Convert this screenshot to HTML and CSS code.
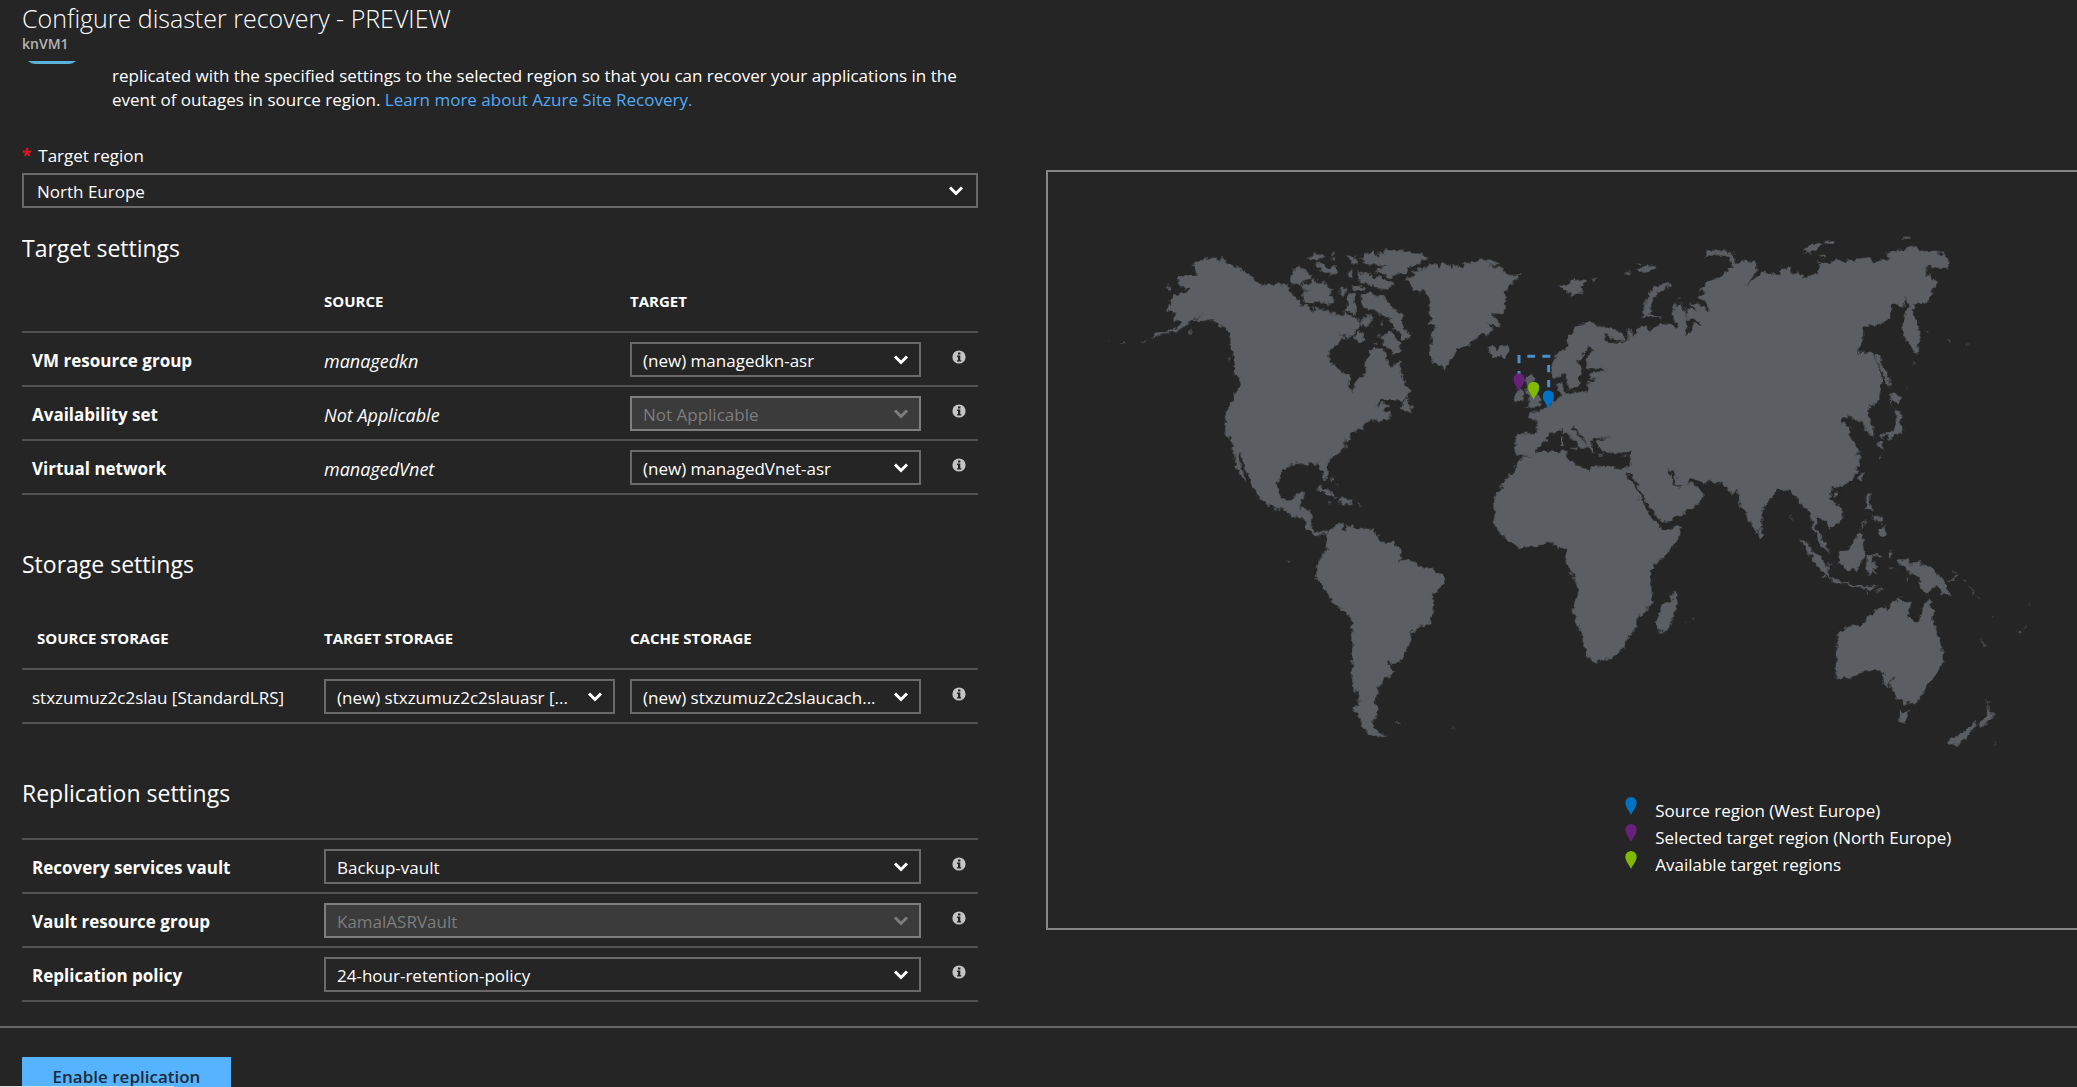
FILE: index.html
```html
<!DOCTYPE html>
<html lang="en">
<head>
<meta charset="utf-8">
<title>Configure disaster recovery - PREVIEW</title>
<link rel="stylesheet" href="styles.css">
</head>
<body>
<svg class="defs" aria-hidden="true">
  <symbol id="chevron" viewBox="0 0 16 12"><path d="M2 2.5 8 8.5 14 2.5" fill="none" stroke="currentColor" stroke-width="3"/></symbol>
  <symbol id="info" viewBox="0 0 14 14"><circle cx="7" cy="7" r="6.6" fill="#c4c4c4"/><path d="M6 2.5h2.4v2H6zM5 5.6h3.3v4.6h1V11.500H5v-1.300h1V6.900H5z" fill="#252525"/></symbol>
  <symbol id="pin" viewBox="0 0 34 54"><path d="M17 0A17 17 0 0 1 34 17C34 30 22 42 17 54 12 42 0 30 0 17A17 17 0 0 1 17 0Z"/></symbol>
</svg>
<div class="blade">
  <header class="blade-header">
    <h1>Configure disaster recovery - PREVIEW</h1>
    <p class="subtitle">knVM1</p>
  </header>
  <main class="content">
    <form class="settings" id="settings">
      <div class="intro">
        <svg class="intro-icon" viewBox="0 0 48 3" aria-hidden="true"><path d="M0 0H48Q45 3 40 3H8Q3 3 0 0Z" fill="#59b4d9"/></svg>
        <p>replicated with the specified settings to the selected region so that you can recover your applications in the event of outages in source region. <a href="#learn">Learn more about Azure Site Recovery.</a></p>
      </div>
      <label class="field-label" for="region"><span class="required">*</span>Target region</label>
      <div class="select region"><select id="region"><option>North Europe</option></select><svg><use href="#chevron"/></svg></div>

      <section class="group target">
        <h2>Target settings</h2>
        <table>
          <colgroup><col class="c1"><col class="c2"><col class="c3"><col class="c4"></colgroup>
          <thead><tr><td></td><th scope="col">SOURCE</th><th scope="col">TARGET</th><td></td></tr></thead>
          <tbody>
            <tr><th scope="row"><label for="vmrg">VM resource group</label></th><td class="source">managedkn</td><td><div class="select"><select id="vmrg"><option>(new) managedkn-asr</option></select><svg><use href="#chevron"/></svg></div></td><td class="info"><svg><use href="#info"/></svg></td></tr>
            <tr><th scope="row"><label for="avset">Availability set</label></th><td class="source">Not Applicable</td><td><div class="select disabled"><select id="avset" disabled><option>Not Applicable</option></select><svg><use href="#chevron"/></svg></div></td><td class="info"><svg><use href="#info"/></svg></td></tr>
            <tr><th scope="row"><label for="vnet">Virtual network</label></th><td class="source">managedVnet</td><td><div class="select"><select id="vnet"><option>(new) managedVnet-asr</option></select><svg><use href="#chevron"/></svg></div></td><td class="info"><svg><use href="#info"/></svg></td></tr>
          </tbody>
        </table>
      </section>

      <section class="group">
        <h2>Storage settings</h2>
        <table class="storage">
          <colgroup><col class="c1"><col class="c2"><col class="c3"><col class="c4"></colgroup>
          <thead><tr><th scope="col">SOURCE STORAGE</th><th scope="col">TARGET STORAGE</th><th scope="col">CACHE STORAGE</th><td></td></tr></thead>
          <tbody>
            <tr><td class="name">stxzumuz2c2slau [StandardLRS]</td><td><div class="select"><select aria-label="Target storage"><option>(new) stxzumuz2c2slauasr [...</option></select><svg><use href="#chevron"/></svg></div></td><td><div class="select"><select aria-label="Cache storage"><option>(new) stxzumuz2c2slaucach...</option></select><svg><use href="#chevron"/></svg></div></td><td class="info"><svg><use href="#info"/></svg></td></tr>
          </tbody>
        </table>
      </section>

      <section class="group">
        <h2>Replication settings</h2>
        <table class="replication">
          <colgroup><col class="c1"><col class="c2"><col class="c3"><col class="c4"></colgroup>
          <tbody>
            <tr><th scope="row"><label for="vault">Recovery services vault</label></th><td colspan="2"><div class="select"><select id="vault"><option>Backup-vault</option></select><svg><use href="#chevron"/></svg></div></td><td class="info"><svg><use href="#info"/></svg></td></tr>
            <tr><th scope="row"><label for="vaultrg">Vault resource group</label></th><td colspan="2"><div class="select disabled"><select id="vaultrg" disabled><option>KamalASRVault</option></select><svg><use href="#chevron"/></svg></div></td><td class="info"><svg><use href="#info"/></svg></td></tr>
            <tr><th scope="row"><label for="policy">Replication policy</label></th><td colspan="2"><div class="select"><select id="policy"><option>24-hour-retention-policy</option></select><svg><use href="#chevron"/></svg></div></td><td class="info"><svg><use href="#info"/></svg></td></tr>
          </tbody>
        </table>
      </section>
    </form>

    <figure class="map">
      <svg class="world" viewBox="24 39 3087 1770" role="img" aria-label="World map of regions">
        <filter id="coast" x="0" y="0" width="1" height="1" color-interpolation-filters="sRGB">
          <feTurbulence type="fractalNoise" baseFrequency="0.06" numOctaves="2" seed="4" result="noise"/>
          <feDisplacementMap in="SourceGraphic" in2="noise" scale="22" xChannelSelector="R" yChannelSelector="G"/>
        </filter>
        <g fill="#5b5e62" filter="url(#coast)">
          <!-- North America -->
          <path d="M455 315 480 308 488 300 510 298 525 295 535 302 550 297 556 308 575 318 590 322 612 338 630 350 640 365 655 372 662 380 680 374 700 377 715 370 722 380 735 376 750 388 748 396 765 408 778 428 782 438 800 437 815 450 818 462 824 446 845 448 860 460 880 458 892 468 905 474 915 455 925 470 950 478 960 492 955 508 945 514 942 528 925 538 908 542 892 552 872 573 868 585 870 612 885 618 897 632 920 645 932 652 925 690 935 695 945 682 950 656 972 650 978 635 972 612 988 588 990 570 1005 564 1022 574 1034 576 1040 588 1040 610 1050 622 1062 620 1076 606 1083 625 1083 645 1097 665 1100 682 1112 692 1105 708 1095 720 1082 728 1060 724 1035 724 1015 732 1005 743 1030 734 1048 736 1030 752 1038 762 1050 754 1048 768 1060 766 1048 778 1028 780 1015 792 1010 782 990 785 972 798 972 810 940 818 930 835 918 852 915 870 895 883 868 897 863 915 862 950 855 968 848 955 845 935 838 915 810 912 800 922 788 914 770 915 745 918 728 935 720 960 712 985 720 1010 735 1025 760 1022 768 1003 795 996 790 1018 776 1048 805 1052 816 1062 812 1095 822 1115 838 1120 852 1110 862 1118 865 1130 850 1122 835 1131 815 1120 798 1108 790 1082 770 1072 742 1064 728 1046 708 1052 682 1035 655 1015 645 990 625 955 612 925 608 890 596 880 598 905 608 938 618 970 606 960 590 925 585 900 580 878 576 850 562 830 553 795 558 760 580 718 586 695 602 682 600 668 585 648 583 600 575 575 568 530 558 508 530 495 515 480 495 485 470 490 462 484 492 462 452 486 438 500 410 515 380 524 335 535 342 526 380 516 415 502 424 490 400 484 404 462 392 458 396 440 390 428 400 408 440 402 455 388 428 386 418 375 415 355 450 345 466 352 470 342Z"/>
          <path fill="#252525" d="M888 520 915 533 935 530 918 538ZM915 835 918 860 912 855Z"/>
          <!-- Arctic islands -->
          <path d="M750 365 758 340 774 320 792 330 806 338 820 356 800 362 785 372 755 376ZM782 375 805 370 822 360 838 375 852 364 860 382 878 392 872 410 884 430 860 436 840 426 818 432 792 428 785 408 792 395 815 400 785 388ZM798 298 825 286 850 288 846 298 825 308 815 302ZM868 285 892 280 870 292ZM830 312 850 310 858 325 872 328 888 318 892 342 868 348 848 338 832 328ZM865 298 890 295 885 302ZM916 288 940 292 952 305 945 320 930 308ZM924 335 940 335 938 360 925 356ZM950 332 965 345 985 342 1000 355 1018 350 1038 362 1058 372 1045 392 1012 388 992 376 965 372 954 352ZM962 300 975 288 998 268 1008 288 1022 300 1015 280 1030 285 1035 272 1060 270 1075 276 1100 274 1118 284 1145 284 1168 300 1142 306 1140 314 1110 322 1098 340 1070 346 1050 358 1022 340 1005 338 1020 328 1045 322 1010 320 1000 312 985 316ZM897 388 920 390 916 402 904 416ZM925 408 940 398 942 430 952 445 945 470 935 460 918 456ZM935 378 962 380 975 392 945 395ZM965 410 988 400 1012 412 1030 405 1040 425 1055 445 1090 462 1085 485 1095 512 1115 525 1098 545 1085 535 1072 515 1058 508 1050 482 1020 468 1000 452 985 450 962 435ZM1012 528 1040 530 1046 515 1062 522 1065 535 1082 550 1076 585 1062 582 1035 562 1030 545ZM938 535 952 525 960 512 968 530 976 542 962 550 950 542ZM960 488 982 465 1000 472 992 498 970 505ZM1018 488 1028 485 1026 500ZM1000 552 1012 548 1010 556Z"/>
          <!-- Greenland, Iceland, Newfoundland -->
          <path d="M1098 358 1130 350 1112 336 1150 330 1165 318 1190 312 1196 326 1208 312 1235 318 1232 332 1250 318 1265 330 1272 312 1300 310 1325 302 1370 308 1378 318 1340 318 1385 328 1410 348 1442 346 1430 360 1412 372 1408 385 1392 402 1402 415 1390 425 1396 445 1385 465 1350 462 1372 480 1382 500 1365 502 1340 488 1362 515 1340 527 1310 532 1290 555 1250 570 1240 595 1212 634 1205 624 1185 612 1168 588 1172 545 1186 495 1160 492 1176 484 1166 460 1172 440 1165 408 1150 395 1118 392ZM1338 566 1358 558 1370 568 1380 560 1402 556 1412 578 1390 595 1362 595 1345 580 1358 574ZM1074 748 1088 730 1105 716 1102 738 1114 744 1117 764 1096 754Z"/>
          <!-- Aleutians, Kodiak, Caribbean, Vancouver Island -->
          <path d="M300 550 322 542 320 547ZM234 551 256 550 254 556ZM206 541 212 544 208 546ZM378 380 394 382 388 392ZM376 452 390 440 398 456 382 456ZM440 520 458 512 450 524ZM564 596 570 590 570 615ZM582 643 604 660 600 664ZM818 990 840 984 862 992 895 1015 880 1016 850 995ZM892 1030 905 1016 925 1020 945 1033 922 1036ZM864 1034 880 1034 870 1038ZM952 1036 970 1038 955 1040ZM870 955 878 958 874 972ZM890 975 895 980 892 985Z"/>
          <!-- Great Britain and Ireland -->
          <path d="M1455 660 1472 648 1482 662 1478 672 1495 700 1506 725 1495 742 1450 746 1472 728 1460 700ZM1420 726 1428 698 1446 688 1456 704 1448 724Z"/>
          <!-- South America -->
          <g transform="translate(720 1020)">
            <path d="M138 105 158 85 178 70 192 68 188 92 200 97 200 70 215 83 250 92 277 90 300 122 315 130 345 132 360 150 366 178 350 190 385 182 408 192 415 206 450 208 490 226 492 252 480 270 460 290 458 340 445 378 415 385 392 400 390 425 375 460 355 495 322 490 342 515 335 530 305 540 305 562 288 565 298 575 284 615 296 630 290 650 280 660 282 685 300 702 322 710 302 716 265 700 242 682 236 650 220 628 238 620 232 570 222 588 215 530 218 440 212 350 190 335 160 318 140 280 108 235 112 200 125 170 140 150ZM342 670 365 670 350 676ZM512 685 530 690 520 690ZM22 188 30 184 28 192Z"/>
            <path d="M1183 278 1193 310 1170 385 1158 395 1136 398 1128 368 1138 350 1140 320 1170 305ZM1218 366 1224 364 1222 369ZM1238 359 1244 360 1240 363Z"/>
          </g>
          <!-- Eurasia, Africa and the northern islands -->
          <g transform="translate(1500 180)">
            <path d="M-72 642 -40 643 -10 640 -8 612 -35 590 -15 578 0 575 20 562 45 545 64 530 56 515 52 495 66 485 70 510 82 526 100 522 145 515 146 488 165 488 148 476 150 464 200 452 180 445 143 452 138 425 160 388 148 382 116 425 122 460 112 508 92 512 80 490 72 462 52 480 38 472 35 435 55 402 85 378 76 362 94 345 110 322 150 310 180 322 215 328 250 345 255 365 235 370 200 345 192 352 205 368 248 378 235 396 220 388 235 372 250 372 268 360 258 335 275 332 280 352 300 325 322 318 328 338 350 325 370 312 412 322 395 290 402 256 425 256 430 275 442 290 446 325 430 347 452 340 462 308 490 324 468 302 445 302 436 265 470 272 445 250 490 262 510 283 498 250 470 235 500 222 480 212 505 185 540 178 555 155 578 145 568 112 525 108 498 114 500 98 530 92 582 105 585 135 620 125 645 128 652 155 615 198 665 160 720 168 722 150 755 148 750 162 775 160 795 178 835 155 838 125 870 132 888 122 905 130 950 118 985 116 1000 132 1050 118 1036 104 1080 92 1120 82 1180 100 1222 108 1222 148 1165 140 1160 165 1195 190 1178 215 1165 252 1130 252 1118 272 1138 335 1132 410 1090 350 1088 310 1105 262 1098 232 1090 262 1058 258 1052 292 1030 312 1000 320 975 322 965 365 952 400 1000 402 1012 430 1028 480 1015 552 988 558 984 590 1000 625 1000 655 982 640 968 608 940 602 922 588 900 612 930 622 928 650 960 700 940 708 962 706 955 745 935 785 905 800 875 810 868 840 905 865 906 905 870 932 855 910 830 890 828 925 845 955 870 1005 855 995 835 960 820 930 810 875 788 862 750 810 738 812 715 808 665 875 667 920 648 943 625 900 598 850 590 812 577 828 545 792 480 788 455 776 430 804 408 795 400 755 385 750 402 795 420 805 455 788 488 820 486 840 435 885 368 914 352 892 318 850 298 812 276 770 268 745 275 695 240 702 205 702 178 692 168 662 215 655 170 655 150 668 165 700 148 690 138 668 100 620 94 626 122 655 148 684 126 690 100 662 68 635 28 642 20 662 -5 685 -15 705 -50 712 -76 705Z"/>
            <path d="M-50 715 0 698 80 696 85 725 150 755 160 738 210 745 250 748 276 745 276 768 256 758 300 828 325 885 368 930 425 920 410 970 380 1005 330 1055 338 1155 290 1195 288 1230 265 1250 250 1285 220 1318 160 1328 142 1310 120 1240 98 1175 113 1115 100 1065 73 1030 80 990 55 985 30 970 -10 980 -62 987 -100 962 -140 915 -136 880 -138 840 -105 780 -75 760 -72 735Z"/>
            <path d="M382 192 392 198 350 222 332 262 332 288 370 300 345 298 308 292 316 242 340 205ZM56 196 78 198 100 176 108 185 128 178 148 186 118 205 132 220 112 222 92 235 86 222 68 215ZM155 180 178 176 160 186ZM254 158 272 154 266 168ZM284 152 310 146 345 135 348 148 320 156 298 162ZM290 134 308 134 298 140ZM786 88 812 84 820 70 845 74 835 88 805 104 792 98ZM848 72 884 64 880 76 858 78ZM832 112 850 106 852 118ZM1090 60 1104 50 1114 57 1096 66ZM412 236 425 238 416 243ZM478 206 488 212 474 218Z"/>
            <path d="M1002 402 1018 412 1022 432 1040 458 1058 508 1038 490 1018 440ZM1055 518 1072 532 1090 530 1070 552 1062 545 1052 558 1050 545ZM1066 570 1084 585 1080 602 1090 640 1070 645 1050 660 1040 648 1016 660 1030 642 1052 642 1068 615ZM1012 668 1030 668 1026 692ZM1118 440 1124 420 1122 436ZM1092 518 1100 508 1108 492 1100 512ZM1156 338 1164 342 1158 344ZM1216 358 1232 370 1226 370ZM1278 372 1284 374 1280 376ZM960 760 972 765 965 792 958 780ZM1018 708 1024 712 1018 724ZM90 690 112 684 108 696ZM60 656 70 652 70 676 62 678ZM172 704 200 708 178 710ZM244 712 262 704 254 714Z"/>
            <path fill="#252525" d="M872 822 882 808 898 806 905 820 898 836 884 842 874 836Z"/>
            <circle cx="887" cy="828" r="8"/>
          </g>
          <!-- South-east Asia and Oceania -->
          <g transform="translate(1980 840)">
            <path d="M178 266 192 288 184 302 176 290ZM297 298 318 308 345 340 385 385 388 418 375 412 350 380 322 338ZM380 415 412 420 430 432 460 436 500 442 540 440 512 450 450 442 400 430ZM524 464 538 450 558 446 540 456ZM490 456 508 460 500 464ZM414 342 440 335 460 315 475 282 498 300 488 320 495 348 472 398 430 388 418 370ZM500 352 545 345 552 350 515 356 512 372 528 362 522 380 532 408 518 392 506 410 498 385ZM496 168 510 166 512 205 526 218 502 210 496 190ZM533 278 555 258 560 290 545 296ZM520 232 538 228 550 246 540 255 530 240 522 248ZM478 270 500 236 492 260ZM562 345 572 332 578 350 568 358ZM590 362 622 360 632 376 655 370 700 390 735 430 754 472 736 470 710 440 682 462 665 452 660 420 630 400 605 380ZM615 420 622 415 622 428ZM560 382 590 384 570 390ZM738 424 758 420 772 402 774 412 756 426ZM758 390 766 398 762 400ZM788 420 798 428 794 432ZM806 440 828 462 822 462ZM832 470 840 480 836 482ZM272 230 276 228 276 248ZM378 372 404 380 388 380ZM304 328 312 336 308 336ZM318 340 328 350 322 350Z"/>
            <path d="M402 705 410 692 408 615 420 578 445 562 490 555 506 528 515 532 525 515 548 500 562 518 575 488 600 476 610 485 636 488 622 520 650 552 662 540 668 508 684 476 698 512 703 562 718 600 730 640 724 680 705 715 680 745 655 785 625 797 585 775 578 745 565 750 552 735 548 700 530 692 480 700 468 710 420 718ZM598 814 612 820 628 816 612 854 598 848ZM858 772 868 800 868 822 888 824 845 867 836 858 858 825 866 805ZM740 908 790 880 822 848 830 862 800 892 765 922 752 918ZM836 596 858 620 850 620ZM955 575 966 576 962 588 954 584ZM970 568 982 566 976 571ZM875 530 880 542 876 538ZM884 906 888 914 884 916ZM988 494 994 496 990 499Z"/>
            <path d="M584 712 568 728 562 742 578 738" fill="none" stroke="#252525" stroke-width="4"/>
          </g>
        </g>
        <path d="M1437 588V613M1437 636V645M1462 592H1485M1507 592H1531M1526 618V640M1526 663V685" fill="none" stroke="#4a8fca" stroke-width="9"/>
        <use href="#pin" x="1420" y="643" width="34" height="54" fill="#68217a"/>
        <use href="#pin" x="1464" y="668" width="34" height="54" fill="#7fba00"/>
        <use href="#pin" x="1508" y="694" width="34" height="54" fill="#0072c6"/>
      </svg>
      <figcaption>
        <ul class="legend">
          <li><svg fill="#0072c6"><use href="#pin"/></svg>Source region (West Europe)</li>
          <li><svg fill="#68217a"><use href="#pin"/></svg>Selected target region (North Europe)</li>
          <li><svg fill="#7fba00"><use href="#pin"/></svg>Available target regions</li>
        </ul>
      </figcaption>
    </figure>
  </main>
  <footer class="actions">
    <button type="submit" form="settings">Enable replication</button>
  </footer>
  <div class="status-edge"></div>
</div>
</body>
</html>
```

FILE: styles.css
```css
* { box-sizing: border-box; }

body {
  margin: 0;
  background: #252525;
  color: #fff;
  font: 17px/24px "Open Sans", "Noto Sans", sans-serif;
}

h1, h2, p, figure, ul { margin: 0; padding: 0; }
h1, h2 { font-weight: 400; }

.defs { display: none; }

.blade {
  position: relative;
  display: flex;
  flex-direction: column;
  height: 100vh;
  overflow: hidden;
}

.blade-header { flex: none; padding: 1px 22px 0; }
.blade-header h1 { font-size: 25px; line-height: 34px; font-weight: 300; }
.subtitle { font-size: 14px; line-height: 17px; color: #b4b4b4; font-weight: 600; }

.content {
  flex: none;
  display: grid;
  grid-template-columns: minmax(0, 956fr) minmax(0, 1031fr);
  column-gap: 68px;
  align-items: start;
  padding: 9px 0 24px 22px;
}

.intro { display: flex; }
.intro-icon { flex: none; width: 48px; height: 3px; margin: 0 36px 0 6px; }
.intro p { padding-top: 3px; }

a { color: #55aaf5; text-decoration: none; }

.field-label { display: block; margin: 32px 0 5px; }
.required { margin-right: 7px; color: #e81123; font-weight: 700; }

.select { position: relative; }
.select select {
  display: block;
  width: 100%;
  height: 35px;
  padding: 3px 40px 0 11px;
  border: 2px solid #6a6a6a;
  border-radius: 0;
  appearance: none;
  background: #252525;
  color: #fff;
  font: inherit;
}
.select.region select { padding-left: 13px; }
.select svg {
  position: absolute;
  top: 12px;
  right: 12px;
  width: 16px;
  height: 12px;
  pointer-events: none;
}
.select.region svg { right: 14px; }
.select.disabled select { background: #3b3b3b; border-color: #7e7e7e; color: #7d7d7d; opacity: 1; }
.select.disabled svg { color: #7d7d7d; }

.group { padding-top: 53px; }
.group.target { padding-top: 24px; }
h2 { font-size: 23px; line-height: 32px; }

table {
  width: 100%;
  border-collapse: collapse;
  table-layout: fixed;
  border-bottom: 2px solid #515151;
}
.c1 { width: 302px; }
.c4 { width: 42px; }
th, td { padding: 0; text-align: left; font-weight: 400; }
thead { font-size: 15px; }
thead th { height: 68px; padding-top: 6px; font-weight: 700; }
thead th:first-child { padding-left: 15px; }
tbody tr { height: 54px; border-top: 2px solid #515151; }
tbody th { padding: 3px 0 0 10px; font-weight: 700; }
tbody td:has(.select) { padding-right: 15px; }
td.source { padding-top: 3px; font-size: 18px; font-style: italic; }
td.name { padding: 3px 0 0 10px; }
td.info { padding: 0 0 5px 16px; }
.info svg { display: block; width: 14px; height: 14px; }
.storage { margin-top: 21px; }
.replication { margin-top: 29px; }

.map {
  margin-top: 109px;
  border: 2px solid #868686;
  border-right: 0;
}
.world { display: block; width: 100%; height: auto; }
figcaption { padding: 35px 0 50px 56%; }
.legend { list-style: none; }
.legend li { display: flex; gap: 17px; height: 27px; line-height: 27px; white-space: nowrap; }
.legend svg { flex: none; width: 14px; height: 18px; }

.actions { flex: none; padding: 29px 22px 24px; border-top: 2px solid #666; }
button {
  width: 209px;
  height: 40px;
  border: 0;
  background: #55b3ff;
  color: #1e2b38;
  font: inherit;
  font-weight: 600;
}

.status-edge { position: absolute; left: 0; bottom: 0; width: 174px; height: 1px; background: #dcdcdc; }
```
